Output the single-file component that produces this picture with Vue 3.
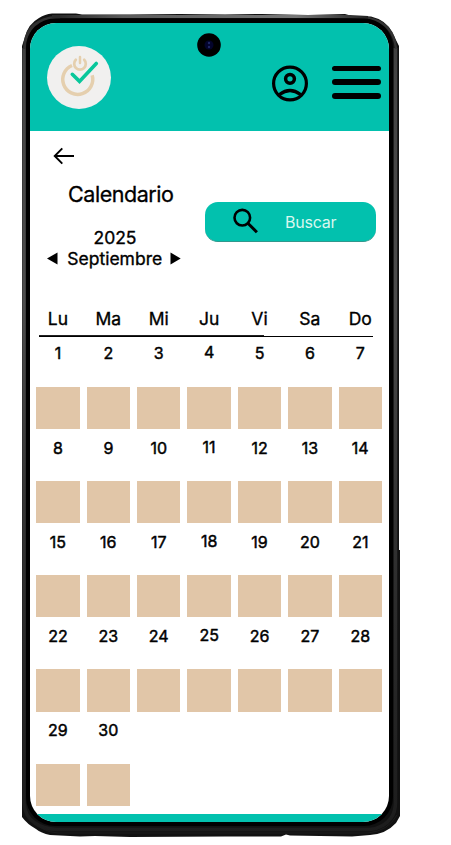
<script setup>
const weekdays = ['Lu', 'Ma', 'Mi', 'Ju', 'Vi', 'Sa', 'Do']
const days = Array.from({ length: 30 }, (_, i) => i + 1)
</script>

<template>
  <main class="stage">
    <div class="phone">
      <svg class="frame" viewBox="0 0 451 845" width="451" height="845" aria-hidden="true">
        <defs>
          <linearGradient id="edge" x1="0" x2="0" y1="14" y2="836" gradientUnits="userSpaceOnUse">
            <stop offset="0" stop-color="#3a3a3a" />
            <stop offset="0.08" stop-color="#444" />
            <stop offset="0.35" stop-color="#4c4c4c" />
            <stop offset="0.6" stop-color="#333" />
            <stop offset="1" stop-color="#1c1c1c" />
          </linearGradient>
          <linearGradient id="top" x1="60" x2="375" y1="0" y2="0" gradientUnits="userSpaceOnUse">
            <stop offset="0" stop-color="#2a2a2a" />
            <stop offset="0.2" stop-color="#5a5a5a" />
            <stop offset="0.75" stop-color="#777" />
            <stop offset="1" stop-color="#1a1a1a" />
          </linearGradient>
        </defs>
        <path d="M22 46 L25 37 Q28 24 39 18 Q45 14 52 13.5 L76 13.5 L82 14.5 L130 14.5 L180 14 L225 14.5 L262 14 L308 15 L345 14 L352 16 L371 16.500 Q386 20 392 32 L399 46 V550 H400 V816 L396 823 Q386 834 370 835 L352 836.500 L320 836 L290 835.500 L286 834.500 L281 836.500 L225 836.500 L130 837 L95 836 L80 836.500 L50 835 Q41 833 36 829 Q27 824 22 817 Z" fill="#111" />
        <path d="M24 48 V803 Q25 817 35 823 Q43 829 56 829.500 H370 Q384 828 391 818 Q395.500 812 395.500 802 V48" fill="none" stroke="url(#edge)" stroke-width="3.500" />
        <path d="M24.500 49 Q25 23 50 18 L60 17" fill="none" stroke="#303030" stroke-width="3" />
        <path d="M368 18 Q394 23 396 49" fill="none" stroke="#333" stroke-width="2.500" />
        <path d="M52 16.500 H350 L368 17.500" fill="none" stroke="url(#top)" stroke-width="3" />
        <path d="M32 820 Q42 832 58 833 H368 Q388 831 397 815" fill="none" stroke="#1d1d1d" stroke-width="1" />
        <rect x="26" y="18.500" width="367" height="807.500" rx="29" fill="#000" />
      </svg>

      <div class="screen">
        <header class="header">
          <div class="logo">
            <svg viewBox="0 0 64 64" width="64" height="64" fill="none" stroke-linecap="round">
              <path d="M25 19.500 A15 15 0 1 0 45.200 29.300" stroke="#e5cfae" stroke-width="3.500" stroke-linecap="butt" />
              <path d="M28.800 13.800 A5.800 5.800 0 1 0 37.200 13.800" stroke="#e5cfae" stroke-width="2.700" />
              <path d="M33 11 V17" stroke="#e5cfae" stroke-width="2.500" />
              <path d="M25.300 28.300 L32.500 35.400 L49.300 17.500" stroke="#08c79b" stroke-width="3.600" />
            </svg>
          </div>
          <svg class="user" viewBox="0 0 36 37" width="36" height="37" fill="none" stroke="#000">
            <circle cx="18" cy="18.500" r="16.400" stroke-width="3.200" />
            <circle cx="18" cy="13.800" r="4.400" stroke-width="3.500" />
            <path d="M7.500 29.500 Q18 21.500 28.500 29.500" stroke-width="3.200" />
          </svg>
          <div class="burger"><i></i><i></i><i></i></div>
        </header>

        <svg class="back" viewBox="0 0 22 18" width="22" height="18" fill="none" stroke="#000" stroke-width="1.900">
          <path d="M21 9 H2 M9.300 1.300 L1.700 9 L9.300 16.700" />
        </svg>

        <section class="intro">
          <div class="titles">
            <h1>Calendario</h1>
            <p class="year">2025</p>
            <div class="month">
              <svg viewBox="0 0 11 13" width="11" height="13"><path d="M0 6.500 L10.500 0.500 V12.500 Z" /></svg>
              <span>Septiembre</span>
              <svg viewBox="0 0 11 13" width="11" height="13"><path d="M10.700 6.500 L0.500 0.500 V12.500 Z" /></svg>
            </div>
          </div>
          <button class="search">
            <svg viewBox="0 0 26 26" width="26" height="26" fill="none" stroke="#000">
              <circle cx="9.300" cy="9.700" r="7.800" stroke-width="2.600" />
              <path d="M14.900 15.300 L23.900 24.300" stroke-width="3" />
            </svg>
            <span>Buscar</span>
          </button>
        </section>

        <div class="weekdays">
          <span v-for="name in weekdays" :key="name">{{ name }}</span>
        </div>
        <div class="rule"></div>
        <div class="days">
          <div v-for="day in days" :key="day" class="day">
            <span>{{ day }}</span>
            <div class="box"></div>
          </div>
        </div>
        <footer class="footer"></footer>
      </div>
      <svg class="camera" viewBox="0 0 24 24" width="24" height="24" aria-hidden="true">
        <circle cx="12" cy="12" r="11.800" fill="#000" />
        <circle cx="12" cy="12" r="4.500" fill="#03042b" />
        <circle cx="12" cy="10" r="1.200" fill="#202765" />
        <circle cx="12" cy="14" r="1.200" fill="#202765" />
      </svg>
    </div>
  </main>
</template>

<style>
body {
  background: #fff;
}
</style>

<style scoped>
.stage {
  width: 451px;
  height: 845px;
  overflow: hidden;
  font-family: Inter, "Liberation Sans", sans-serif;
  color: #000;
}
.phone {
  position: relative;
  box-sizing: border-box;
  height: 845px;
  padding: 23px 0 0 30px;
}
.frame {
  position: absolute;
  top: 0;
  left: 0;
}
.camera {
  position: absolute;
  top: 33px;
  left: 197px;
}
.screen {
  position: relative;
  display: flex;
  flex-direction: column;
  width: 358.5px;
  height: 799px;
  overflow: hidden;
  border-radius: 26px;
  background: #fff;
}
.header {
  flex: none;
  display: flex;
  box-sizing: border-box;
  height: 107.5px;
  padding: 22.5px 7.5px 0 17px;
  background: #02c1ae;
}
.logo {
  width: 64px;
  height: 63px;
  border-radius: 50%;
  background: #f1f0ef;
}
.logo svg,
.intro svg,
.user {
  display: block;
}
.user {
  margin: 19.5px 24px 0 auto;
}
.burger {
  display: flex;
  flex-direction: column;
  gap: 8px;
  padding-top: 20px;
}
.burger i {
  width: 49px;
  height: 5.7px;
  border-radius: 3px;
  background: #000;
}
.back {
  flex: none;
  margin: 16.5px 0 0 23px;
}
.intro {
  flex: none;
  display: flex;
  height: 137px;
}
.titles {
  width: 175px;
  padding-top: 15px;
}
h1 {
  margin: 0 0 0 38px;
  font-size: 21.5px;
  font-weight: 400;
  line-height: 28px;
  letter-spacing: -0.45px;
  -webkit-text-stroke: 0.3px #000;
}
.year {
  width: 170px;
  margin: 19px 0 0;
  font-size: 17.5px;
  line-height: 21px;
  text-align: center;
  -webkit-text-stroke: 0.35px #000;
}
.month {
  display: flex;
  align-items: center;
  width: 135px;
  margin-left: 16.5px;
  font-size: 17.5px;
  line-height: 21px;
  justify-content: space-between;
  -webkit-text-stroke: 0.35px #000;
}
.month span {
  padding-left: 1.5px;
}
.search {
  display: flex;
  align-items: flex-start;
  box-sizing: border-box;
  width: 171px;
  height: 40px;
  margin: 37px 0 0;
  padding: 6px 0 0 27.5px;
  border: 0;
  border-bottom: 1px solid #31988d;
  border-radius: 13px;
  background: #02c1ae;
  font: 400 16px/26px Inter, "Liberation Sans", sans-serif;
  letter-spacing: -0.25px;
  color: #d9f7ef;
}
.search span {
  margin: 0.5px 0 0 26.5px;
}
.weekdays,
.days {
  display: grid;
  grid-template-columns: repeat(7, 43.3px);
  column-gap: 7.1px;
  margin-left: 6.3px;
  text-align: center;
}
.weekdays {
  height: 33px;
  font-size: 17.5px;
  line-height: 26px;
  -webkit-text-stroke: 0.35px #000;
}
.weekdays span {
  padding-top: 4px;
}
.rule {
  flex: none;
  width: 334px;
  height: 2px;
  margin: 0 0 0 9px;
  background: linear-gradient(#000, #000) 0 1px / 334px 1px no-repeat, linear-gradient(#222, #222) 0 0 / 225px 1px no-repeat;
}
.days {
  grid-auto-rows: 94.25px;
  height: 477px;
  font-size: 16px;
  -webkit-text-stroke: 0.45px #000;
}
.day span {
  display: block;
  height: 49.6px;
  padding-top: 6.4px;
  box-sizing: border-box;
  line-height: 20px;
}
.day:nth-child(7n + 4) span {
  padding-top: 5.4px;
}
.box {
  height: 42.3px;
  background: #e1c6a8;
}
.footer {
  flex: none;
  height: 8px;
  margin-top: auto;
  background: #02c1ae;
}
</style>
